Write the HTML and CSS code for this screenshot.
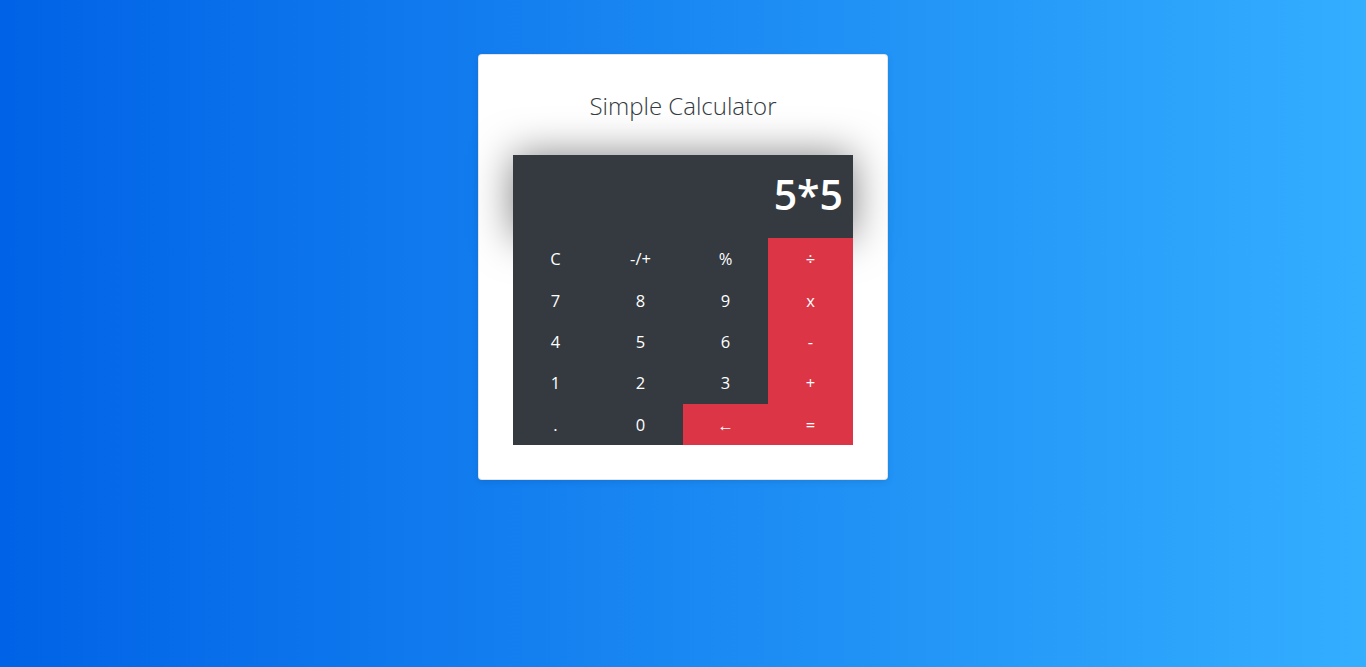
FILE: index.html
```html
<!DOCTYPE html>
<html>
<head>
<meta charset="utf-8">
<link rel="stylesheet" href="styles.css">
</head>
<body>
<main class="page">
  <section class="card">
    <h3 class="title">Simple Calculator</h3>
    <div class="calc">
      <div class="display">5*5</div>
      <div class="keys">
        <div class="key">C</div>
        <div class="key">-/+</div>
        <div class="key">%</div>
        <div class="key op">÷</div>
        <div class="key">7</div>
        <div class="key">8</div>
        <div class="key">9</div>
        <div class="key op">x</div>
        <div class="key">4</div>
        <div class="key">5</div>
        <div class="key">6</div>
        <div class="key op">-</div>
        <div class="key">1</div>
        <div class="key">2</div>
        <div class="key">3</div>
        <div class="key op">+</div>
        <div class="key">.</div>
        <div class="key">0</div>
        <div class="key op">←</div>
        <div class="key op">=</div>
      </div>
    </div>
  </section>
</main>
</body>
</html>
```

FILE: styles.css
```css
html, body {
  margin: 0;
  padding: 0;
  height: 100%;
}
body {
  background: linear-gradient(to right, #0062E6, #33AEFF);
  font-family: "Open Sans", "Noto Sans", sans-serif;
  color: #212529;
}
.page {
  display: flex;
  justify-content: center;
  padding-top: 54px;
}
.card {
  width: 410px;
  box-sizing: border-box;
  background: #fff;
  border-radius: 4px;
  border: 1px solid rgba(0, 0, 0, 0.1);
  padding: 34px 34px 34px;
  box-shadow: 0 2px 6px rgba(0, 0, 0, 0.1);
}
.title {
  margin: 0 0 32px;
  text-align: center;
  font-weight: 300;
  font-size: 24px;
  line-height: 34px;
  color: #343a40;
}
.calc {
  background: #343a40;
}
.display {
  height: 83px;
  box-sizing: border-box;
  text-align: right;
  color: #fff;
  font-weight: 600;
  font-size: 41px;
  line-height: 1;
  padding: 19px 10px 0;
  background: #343a40;
  box-shadow: 0 0 40px rgba(0, 0, 0, 0.5);
}
.keys {
  display: grid;
  grid-template-columns: repeat(4, 85px);
  grid-auto-rows: 41.4px;
  background: #343a40;
  position: relative;
}
.key {
  display: flex;
  align-items: center;
  justify-content: center;
  color: #fff;
  font-size: 16.5px;
}
.op {
  background: #dc3545;
}
```
